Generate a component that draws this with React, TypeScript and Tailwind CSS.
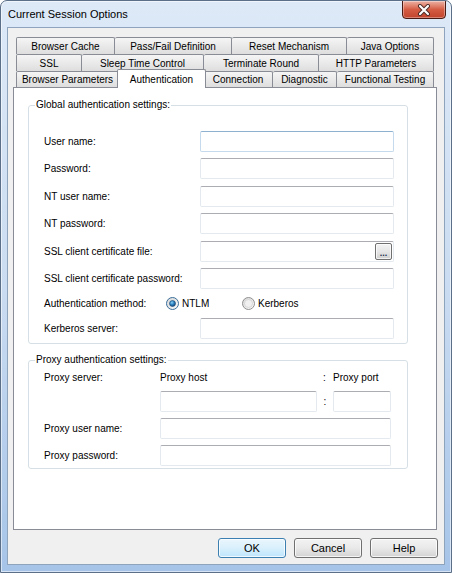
const font = "font-['Liberation_Sans',Arial,sans-serif]";

type Tab = { label: string; w: string; first?: boolean; selected?: boolean };

const topRows: Tab[][] = [
  [
    { label: "Browser Cache", w: "w-[99px]", first: true },
    { label: "Pass/Fail Definition", w: "w-[117px]" },
    { label: "Reset Mechanism", w: "w-[115px]" },
    { label: "Java Options", w: "w-[87px]" },
  ],
  [
    { label: "SSL", w: "w-[66px]", first: true },
    { label: "Sleep Time Control", w: "w-[122px]" },
    { label: "Terminate Round", w: "w-[115px]" },
    { label: "HTTP Parameters", w: "w-[115px]" },
  ],
];

const bottomRow: Tab[] = [
  { label: "Browser Parameters", w: "w-[103px]", first: true },
  { label: "Authentication", w: "w-[89px]", selected: true },
  { label: "Connection", w: "w-[69px]" },
  { label: "Diagnostic", w: "w-[64px]" },
  { label: "Functional Testing", w: "w-[97px]" },
];

function TabItem({ tab, h }: { tab: Tab; h: string }) {
  if (tab.selected)
    return (
      <div
        className={`${tab.w} relative z-10 -mx-[2px] -mb-px h-[19px] shrink-0 flex items-start justify-center pt-[2px] rounded-t-[2px] border border-b-0 border-[#898c95] bg-white`}
      >
        {tab.label}
      </div>
    );
  return (
    <div
      className={`${tab.w} ${h} shrink-0 flex items-center justify-center rounded-t-[2px] border-t border-r border-[#898c95] ${
        tab.first ? "border-l" : ""
      } bg-linear-to-b from-[#f5f5f5] to-[#dedede]`}
    >
      {tab.label}
    </div>
  );
}

function TextBox({ w, focused }: { w: string; focused?: boolean }) {
  return (
    <input
      type="text"
      className={`${w} h-[21px] shrink-0 rounded-[2px] border bg-white px-1 outline-none ${
        focused
          ? "border-[#c5daed] border-t-[#8fb1d0]"
          : "border-[#e3e9ef] border-t-[#abadb3]"
      }`}
    />
  );
}

function FileBox() {
  return (
    <div className="w-[194px] h-[21px] shrink-0 flex items-center rounded-[2px] border border-[#e3e9ef] border-t-[#abadb3] bg-white pr-px">
      <input type="text" className="flex-1 min-w-0 h-full px-1 outline-none bg-transparent" />
      <button className="w-[17px] h-[17px] flex items-end justify-center rounded-[2px] border border-[#707070] bg-linear-to-b from-[#f4f4f4] via-[#e6e6e6] to-[#cfcfcf] text-[9px] leading-[11px] font-bold text-[#1c2f52] shadow-[inset_0_0_0_1px_rgba(255,255,255,0.7)]">
        ...
      </button>
    </div>
  );
}

function Radio({ checked }: { checked?: boolean }) {
  return (
    <svg width="13" height="13" viewBox="0 0 13 13" className="shrink-0">
      <defs>
        <linearGradient id="rbg" x1="0" y1="0" x2="1" y2="1">
          <stop offset="0" stopColor="#d6d6d6" />
          <stop offset="1" stopColor="#fdfdfd" />
        </linearGradient>
        <radialGradient id="dot" cx="0.4" cy="0.35" r="0.7">
          <stop offset="0" stopColor="#8ad0f5" />
          <stop offset="0.5" stopColor="#2a80bf" />
          <stop offset="1" stopColor="#0d3f73" />
        </radialGradient>
      </defs>
      <circle cx="6.5" cy="6.5" r="6" fill="url(#rbg)" stroke={checked ? "#3a6e99" : "#8e8f8f"} />
      {checked ? (
        <circle cx="6.5" cy="6.5" r="3" fill="url(#dot)" stroke="#1d4a73" strokeWidth="0.6" />
      ) : (
        <circle cx="6.5" cy="6.5" r="4" fill="#f0f0f0" stroke="#c9c9c9" strokeWidth="0.6" />
      )}
    </svg>
  );
}

function Row({ label, mt, children }: { label: string; mt: string; children: React.ReactNode }) {
  return (
    <div className={`${mt} flex items-center h-[21px] pl-[15px]`}>
      <span className="w-[156px] shrink-0">{label}</span>
      {children}
    </div>
  );
}

function Group({ title, h, children }: { title: string; h: string; children: React.ReactNode }) {
  return (
    <div className={`relative ml-[14px] w-[380px] ${h} rounded-[3px] border border-[#d5dfe5]`}>
      <span className="absolute left-[6px] -top-[7px] bg-white px-px leading-[12px]">{title}</span>
      {children}
    </div>
  );
}

function Button({ label, primary }: { label: string; primary?: boolean }) {
  return (
    <button
      className={`w-[68px] h-[20px] rounded-[3px] border text-[11px] shadow-[inset_0_0_0_1px_rgba(255,255,255,0.75)] ${
        primary
          ? "border-[#3c7fb1] bg-linear-to-b from-[#eaf6fd] via-[#d9f0fc] to-[#bee6fd]"
          : "border-[#707070] bg-linear-to-b from-[#f3f3f3] via-[#e9e9e9] to-[#d3d3d3]"
      }`}
    >
      {label}
    </button>
  );
}

export default function App() {
  return (
    <div
      className={`${font} text-[10px] text-black w-[452px] h-[573px] rounded-t-[7px] border border-[#5b6f88] bg-linear-to-b from-[#dde9f7] via-[#cadcf1] to-[#a6c4e8] shadow-[inset_0_0_0_1px_rgba(255,255,255,0.55)] overflow-hidden`}
    >
      <div className="flex items-start h-[26px]">
        <span className="pl-[7px] pt-[6px] text-[11px] leading-[14px] flex-1">Current Session Options</span>
        <div className="-mt-px mr-[5px] w-[44px] h-[19px] flex items-center justify-center rounded-b-[4px] border border-[#4a1a12] bg-linear-to-b from-[#eab1a4] via-[#d55c43] to-[#c2432c] shadow-[inset_0_0_0_1px_rgba(255,255,255,0.35)]">
          <svg width="14" height="12" viewBox="0 0 14 12">
            <path d="M3 2 L11 10 M11 2 L3 10" stroke="#4a2a26" strokeWidth="4" strokeLinecap="round" />
            <path d="M3 2 L11 10 M11 2 L3 10" stroke="#ffffff" strokeWidth="2.2" strokeLinecap="round" />
          </svg>
        </div>
      </div>

      <div className="mx-[6px] h-[538px] border border-[#8ea4bd] bg-[#f0f0f0]">
        <div className="ml-[5px] mt-[9px] w-[424px]">
          <div className="px-[3px]">
            {topRows.map((row, i) => (
              <div key={i} className="flex h-[17px]">
                {row.map((t) => (
                  <TabItem key={t.label} tab={t} h="h-[17px]" />
                ))}
              </div>
            ))}
            <div className="flex items-end h-[16px]">
              {bottomRow.map((t) => (
                <TabItem key={t.label} tab={t} h="h-[16px]" />
              ))}
            </div>
          </div>

          <div className="h-[443px] border border-[#898c95] bg-white pt-[17px]">
            <Group title="Global authentication settings:" h="h-[239px]">
              <div className="pt-[25px]">
                <Row label="User name:" mt="mt-0">
                  <TextBox w="w-[194px]" focused />
                </Row>
                <Row label="Password:" mt="mt-[6px]">
                  <TextBox w="w-[194px]" />
                </Row>
                <Row label="NT user name:" mt="mt-[7px]">
                  <TextBox w="w-[194px]" />
                </Row>
                <Row label="NT password:" mt="mt-[6px]">
                  <TextBox w="w-[194px]" />
                </Row>
                <Row label="SSL client certificate file:" mt="mt-[7px]">
                  <FileBox />
                </Row>
                <Row label="SSL client certificate password:" mt="mt-[6px]">
                  <TextBox w="w-[194px]" />
                </Row>
                <div className="mt-[6px] flex items-center h-[16px] pl-[15px]">
                  <span className="w-[122px] shrink-0">Authentication method:</span>
                  <label className="w-[76px] flex items-center gap-[3px]">
                    <Radio checked />
                    <span>NTLM</span>
                  </label>
                  <label className="flex items-center gap-[3px]">
                    <Radio />
                    <span>Kerberos</span>
                  </label>
                </div>
                <Row label="Kerberos server:" mt="mt-[7px]">
                  <TextBox w="w-[194px]" />
                </Row>
              </div>
            </Group>

            <div className="mt-[16px]">
              <Group title="Proxy authentication settings:" h="h-[109px]">
                <div className="pt-[9px] pl-[15px]">
                  <div className="flex items-center h-[14px]">
                    <span className="w-[116px] shrink-0">Proxy server:</span>
                    <span className="w-[163px] shrink-0">Proxy host</span>
                    <span className="w-[10px] shrink-0">:</span>
                    <span>Proxy port</span>
                  </div>
                  <div className="mt-[7px] flex items-center h-[21px]">
                    <span className="w-[116px] shrink-0" />
                    <TextBox w="w-[157px]" />
                    <span className="w-[16px] shrink-0 text-center">:</span>
                    <TextBox w="w-[58px]" />
                  </div>
                  <div className="mt-[6px] flex items-center h-[21px]">
                    <span className="w-[116px] shrink-0">Proxy user name:</span>
                    <TextBox w="w-[231px]" />
                  </div>
                  <div className="mt-[6px] flex items-center h-[21px]">
                    <span className="w-[116px] shrink-0">Proxy password:</span>
                    <TextBox w="w-[231px]" />
                  </div>
                </div>
              </Group>
            </div>
          </div>
        </div>

        <div className="mt-[8px] mr-[6px] flex justify-end gap-[8px]">
          <Button label="OK" primary />
          <Button label="Cancel" />
          <Button label="Help" />
        </div>
      </div>
    </div>
  );
}
